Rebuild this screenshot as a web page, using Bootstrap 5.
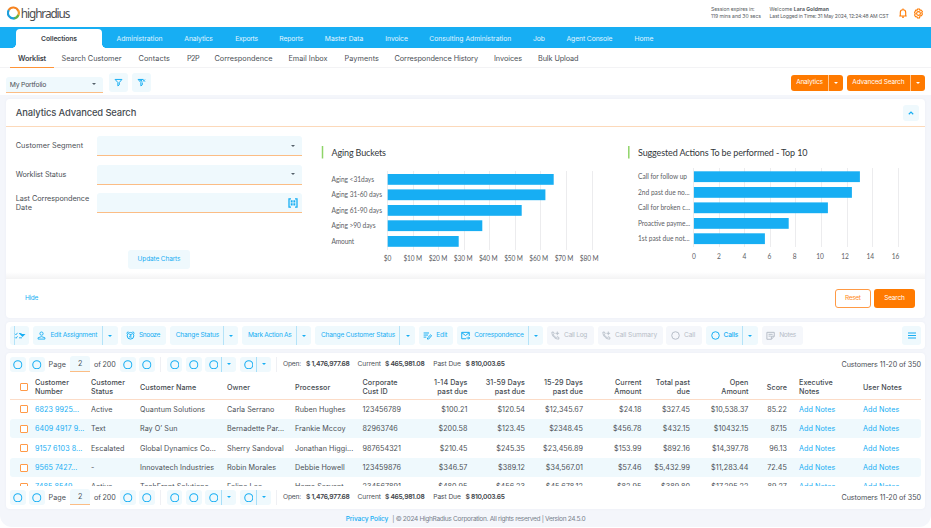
<!DOCTYPE html>
<html lang="en">
<head>
<meta charset="utf-8">
<meta name="viewport" content="width=device-width, initial-scale=1">
<title>Collections Worklist</title>
<link rel="stylesheet" href="https://cdn.jsdelivr.net/npm/bootstrap@5.3.0/dist/css/bootstrap.min.css">
<style>
:root{--hr-blue:#17aef3;--hr-orange:#ff7a00;--hr-tint:#eff9fd;--hr-text:#4b5056;--hr-peach:#fbbd85}
html,body{height:528px;overflow:hidden}
body{font-family:Inter,"Open Sans",sans-serif;font-size:7.2px;line-height:9px;color:var(--hr-text);background:#fff}
a{text-decoration:none;color:var(--hr-blue)}
svg{display:block;flex:none}
.fit{white-space:nowrap;display:inline-block}
.shell{height:527px;background:#f4f6fb;border-radius:0 0 12px 12px;overflow:hidden}
.top-bar{height:27px;background:#fff;padding:0 7px 0 7px}
.meta{font-size:5.1px;line-height:7.4px;color:#565b61;height:15px}
.brand-name{font-family:"Noto Sans","Open Sans",sans-serif;font-size:11.8px;line-height:14px;color:#4d4d4f;margin:0 0 1px .8px}
.main-nav{height:21px;background:var(--hr-blue);padding-left:16px}
.main-nav a{color:#e0f5ff;font-size:6.8px;padding-top:1.6px}
.main-nav .tab-on{width:86px;height:19px;margin-top:2px;background:#fff;border-radius:4px 4px 0 0;color:#3d444a;font-weight:600;position:relative;padding-top:0}
.tab-on::before,.tab-on::after{content:"";position:absolute;bottom:0;width:4px;height:4px}
.tab-on::before{left:-4px;background:radial-gradient(circle at 0 0,transparent 3.6px,#fff 4px)}
.tab-on::after{right:-4px;background:radial-gradient(circle at 100% 0,transparent 3.6px,#fff 4px)}
.sub-nav{height:20px;background:#fff;border-bottom:1px solid #f3f3f5;padding-left:10px}
.sub-nav a{color:var(--hr-text);font-size:7.3px;height:20px;line-height:22.4px}
.sub-nav .on{width:44px;text-align:center;font-weight:600;border-bottom:1px solid #ff9438;color:#3d444a}
.filter-bar{height:27.5px;background:#fff;padding:4px 6px 0}
.field{background:var(--hr-tint);border-bottom:1px solid var(--hr-peach);border-radius:3px 3px 0 0}
.caret{width:0;height:0;border:2.4px solid transparent;border-top:2.6px solid #54606a;border-bottom:0;flex:none}
.caret.b{border-top-color:var(--hr-blue);border-width:2.9px 2.6px 0}
.caret.w{border-top-color:#fff;border-width:2.9px 2.6px 0}
.tile{background:var(--hr-tint);border-radius:3px;color:var(--hr-blue);display:flex;align-items:center;justify-content:center;flex:none}
.solid{background:var(--hr-orange);border-radius:3px;height:16px;color:#fff;font-size:6.5px}
.solid .cut{border-left:1px solid #ffc793;height:16px;width:15.3px}
.panel{background:#fff;border-radius:4px;margin:0 6px;box-shadow:0 0 3px rgba(60,80,120,.05)}
.search-panel{height:219px;margin-top:3.8px}
.panel-head{height:28px;border-bottom:1px solid #fcd9ba;padding:0 4px 0 9.7px}
.panel-head h1{font-size:9.4px;line-height:12px;font-weight:500;margin:0;color:#464b51}
.panel-body{height:151.5px;background:linear-gradient(#fff 0,#fff 145px,#f4f4f5 151.5px)}
.form-side{width:297px;padding:9px 0 0 9.7px}
.form-line{height:28.5px}
.form-line .name{width:81.3px;font-size:7.3px}
.form-line .field{width:205.4px;height:20px;padding-right:7px}
.panel-foot{height:39px;padding:0 10.3px 0 19px;font-size:6.5px}
.reset{width:36px;height:19.5px;border:1px solid #ff9a45;border-radius:3px;color:#ff8a20}
.find{width:40.5px;height:19.5px;background:var(--hr-orange);border-radius:3px;color:#fff;margin-left:3.5px}
.chart{font-family:Lato,sans-serif;font-size:6.6px;fill:#5c6065}
.chart .cap{font-size:9px;fill:#33373b}
.chart .bars{fill:var(--hr-blue)}
.chart .grid-lines{stroke:#ececee;stroke-width:1}
.tools{height:27px;margin-top:4px;padding:0 4px;gap:3.9px;font-size:6.6px}
.tools .act{height:19px;background:var(--hr-tint);border-radius:3px;color:var(--hr-blue);padding-left:4.5px;gap:4px;display:flex;align-items:center;flex:none}
.tools .act.plain{padding-left:6px}
.tools .act.off{background:#f5f7fb;color:#b6bdc7}
.tools .drop{margin-left:auto;width:15.6px;height:19px;border-left:1px solid #b5e3f8;display:flex;align-items:center;justify-content:center}
.w1{width:19px}.w2{width:84.7px}.w3{width:44.3px}.w4{width:68.5px}.w5{width:69px}.w6{width:100px}.w7{width:34px}.w8{width:86px}.w9{width:47px}.w10{width:65px}.w11{width:35.8px}.w12{width:51.7px}.w13{width:41px}
.grid-panel{height:156px;margin-top:4px;padding:0 4px}
.pager{height:22.6px;font-size:7.2px}
.pager .tile{width:15.5px;height:15.5px;margin-right:3.8px}
.pager .tile.wide{width:31px;margin-right:4px;justify-content:flex-start;padding-left:3.2px}
.pager .wide .cut{border-left:1px solid #a9dff8;height:15.5px;width:15.3px;margin-left:auto}
.pager .field{width:20px;height:16px;margin:0 4px}
.pager .bar{width:1px;height:15px;background:#eff0f4}
.pager .tot{font-size:6.7px}
.pager .tot b{font-weight:600;color:#3d4247}
.rows-box{height:110.4px;overflow:hidden}
.grid-table{table-layout:fixed;width:911px;margin:0;font-size:7.2px;letter-spacing:.05px;line-height:9px;border-collapse:separate;border-spacing:0;color:var(--hr-text)}
.grid-table th{font-weight:500;height:24px;padding:0;vertical-align:middle;border-bottom:1px solid #fcdcc7;color:#464b51}
.grid-table td{height:19.4px;padding:0;white-space:nowrap;vertical-align:middle}
.grid-table tr:nth-child(even) td{background:var(--hr-tint)}
.grid-table td:first-child{border-radius:3px 0 0 3px}
.grid-table td:last-child{border-radius:0 3px 3px 0}
.grid-table .ex{padding-left:12px}
.grid-table th:nth-child(n+8):nth-child(-n+14),.grid-table td:nth-child(n+8):nth-child(-n+14){text-align:right}
.tick{width:8px;height:8px;border:1px solid #ff9a48;border-radius:1px;margin-left:10px;background:#fff}
.legal{height:18px;font-size:6.6px;color:#78818c;padding-top:3.5px}
</style>
<script src="https://cdn.jsdelivr.net/npm/bootstrap@5.3.0/dist/js/bootstrap.bundle.min.js"></script>
</head>
<body>
<svg width="0" height="0" class="position-absolute" aria-hidden="true">
  <symbol id="ring" viewBox="0 0 10 10"><circle cx="5" cy="5" r="4.200" fill="none" stroke="currentColor" stroke-width="1.100"/></symbol>
  <symbol id="funnel" viewBox="0 0 10 10"><path d="M1.200 1.600h7.600L5.900 5v2.600L4.300 8.800V5z" fill="none" stroke="currentColor" stroke-width="1.100" stroke-linejoin="round"/></symbol>
  <symbol id="phone" viewBox="0 0 10 10"><path d="M1 1.200h1.800l.7 2-1 .9c.7 1.500 1.800 2.600 3.300 3.300l.9-1 2 .7V9C4.300 9.100.9 5.600 1 1.200zM7 .6v4M5 2.600h4" fill="none" stroke="currentColor" stroke-width="1" stroke-linejoin="round"/></symbol>
</svg>
<div class="shell d-flex flex-column">
  <header class="top-bar d-flex align-items-center">
    <svg width="13" height="14" viewBox="0.500 0 13 14" fill="none" stroke-width="2.200"><path d="M2.200 4.200A5.300 5.300 0 0 1 11.800 5" stroke="#f5821f"/><path d="M11.600 4.200a5.300 5.300 0 0 1-.2 5.700" stroke="#f5a030"/><path d="M11.900 9a5.300 5.300 0 0 1-4.900 3.300" stroke="#62b345"/><path d="M8 12.200A5.300 5.300 0 0 1 2.300 4.200" stroke="#1c9fdc"/></svg>
    <span class="brand-name fit" data-w="48.500">highradius</span>
    <div class="meta ms-auto" style="width:58.500px"><span class="fit" data-w="43.500">Session expires in:</span><br><span class="fit" data-w="50">119 mins and 30 secs</span></div>
    <div class="meta" style="width:128.500px"><span class="fit" data-w="59.500">Welcome <b>Lara Goldman</b></span><br><span class="fit" data-w="119">Last Logged in Time: 31 May 2024, 12:24:48 AM CST</span></div>
    <svg width="10" height="10" viewBox="0 0 10 10" fill="none" stroke="#ff7a00" stroke-width="1.100"><path d="M1.300 8h7.400M2.300 8V4.400a2.700 2.700 0 0 1 5.400 0V8M5 .6v1.200M4 9.300h2"/></svg>
    <svg width="11" height="11" viewBox="0 0 11 11" fill="none" stroke="#ff7a00" stroke-width="1.100" style="margin-left:5px"><path d="M4.500 1h2l.4 1.300 1.200-.3 1.300 1.600-.7 1.200.7 1.300-.9 1.700-1.400-.1L6.500 10h-2l-.6-1.300-1.400.1-.9-1.700.7-1.300-.7-1.200L2.800 2l1.300.3z" stroke-linejoin="round"/><circle cx="5.500" cy="5.500" r="1.900"/></svg>
  </header>

  <nav class="main-nav d-flex align-items-center">
    <a href="#" class="tab-on d-flex align-items-center justify-content-center"><span class="fit" data-w="36">Collections</span></a>
    <a href="#" style="margin-left:14.500px"><span class="fit" data-w="46">Administration</span></a>
    <a href="#" style="margin-left:21.800px"><span class="fit" data-w="28.500">Analytics</span></a>
    <a href="#" style="margin-left:22.500px"><span class="fit" data-w="22.500">Exports</span></a>
    <a href="#" style="margin-left:21.500px"><span class="fit" data-w="24">Reports</span></a>
    <a href="#" style="margin-left:21.500px"><span class="fit" data-w="38.500">Master Data</span></a>
    <a href="#" style="margin-left:22px"><span class="fit" data-w="22.500">Invoice</span></a>
    <a href="#" style="margin-left:21.500px"><span class="fit" data-w="82">Consulting Administration</span></a>
    <a href="#" style="margin-left:21.700px"><span class="fit" data-w="12">Job</span></a>
    <a href="#" style="margin-left:21.500px"><span class="fit" data-w="46">Agent Console</span></a>
    <a href="#" style="margin-left:22px"><span class="fit" data-w="19">Home</span></a>
  </nav>

  <nav class="sub-nav d-flex">
    <a href="#" class="on"><span class="fit" data-w="28">Worklist</span></a>
    <a href="#" style="margin-left:7.500px"><span class="fit" data-w="60">Search Customer</span></a>
    <a href="#" style="margin-left:17px"><span class="fit" data-w="31.500">Contacts</span></a>
    <a href="#" style="margin-left:17px"><span class="fit" data-w="12">P2P</span></a>
    <a href="#" style="margin-left:15.500px"><span class="fit" data-w="58">Correspondence</span></a>
    <a href="#" style="margin-left:16px"><span class="fit" data-w="39">Email Inbox</span></a>
    <a href="#" style="margin-left:17px"><span class="fit" data-w="34.500">Payments</span></a>
    <a href="#" style="margin-left:15.500px"><span class="fit" data-w="83.500">Correspondence History</span></a>
    <a href="#" style="margin-left:16px"><span class="fit" data-w="28">Invoices</span></a>
    <a href="#" style="margin-left:16px"><span class="fit" data-w="40.500">Bulk Upload</span></a>
  </nav>

  <div class="filter-bar d-flex align-items-start">
    <div class="field d-flex align-items-center justify-content-between" style="width:96.500px;height:16px;margin-top:4.600px;padding:0 6.500px 0 3.700px"><span class="fit" data-w="36.500" style="font-size:6.800px">My Portfolio</span><span class="caret"></span></div>
    <div class="tile" style="width:19.300px;height:19px;margin-left:6px;margin-top:.7px"><svg width="9" height="9"><use href="#funnel"/></svg></div>
    <div class="tile" style="width:19.300px;height:19px;margin-left:4px;margin-top:.7px"><svg width="9" height="9" viewBox="0 0 10 10"><path d="M5.900 5v2.600L4.300 8.800V5L1.200 1.600h6" fill="none" stroke="currentColor" stroke-width="1.100"/><path d="M2.500 2h3L5.500 4.500z" fill="currentColor"/><path d="m6.500 1.700 2.400 2.400m0-2.400L6.500 4.100" stroke="currentColor" stroke-width="1"/></svg></div>
    <div class="solid d-flex align-items-center ms-auto" style="width:52.500px;margin-top:2.800px"><span class="flex-fill text-center"><span class="fit" data-w="26.500">Analytics</span></span><span class="cut d-flex align-items-center justify-content-center"><i class="caret w"></i></span></div>
    <div class="solid d-flex align-items-center" style="width:78px;margin:2.800px 0 0 3.700px"><span class="flex-fill text-center"><span class="fit" data-w="52">Advanced Search</span></span><span class="cut d-flex align-items-center justify-content-center"><i class="caret w"></i></span></div>
  </div>

  <section class="panel search-panel">
    <div class="panel-head d-flex align-items-center justify-content-between"><h1><span class="fit" data-w="120.500">Analytics Advanced Search</span></h1>
      <div class="tile" style="width:16px;height:16px;margin-right:2px"><svg width="6" height="4" viewBox="0 0 6 4"><path d="M.8 3.200 3 1.100 5.200 3.200" fill="none" stroke="currentColor" stroke-width="1.200"/></svg></div></div>
    <div class="panel-body d-flex">
      <div class="form-side">
        <div class="form-line d-flex"><label class="name" style="padding-top:5.200px"><span class="fit" data-w="67.500">Customer Segment</span></label><div class="field d-flex align-items-center justify-content-end"><i class="caret"></i></div></div>
        <div class="form-line d-flex"><label class="name" style="padding-top:5.200px"><span class="fit" data-w="50.500">Worklist Status</span></label><div class="field d-flex align-items-center justify-content-end"><i class="caret"></i></div></div>
        <div class="form-line d-flex"><label class="name" style="padding-top:.7px"><span class="fit" data-w="73.500">Last Correspondence</span><br><span class="fit" data-w="16.500">Date</span></label><div class="field d-flex align-items-center justify-content-end" style="padding-right:4.500px"><svg width="10" height="10" viewBox="0 0 10 10" fill="none" stroke="#17aef3" stroke-width="1.300"><path d="M3 .8H1v8.400h2M7 .8h2v8.400H7"/><path d="M2.700 3.300h1.900m.8 0h1.900M2.700 6.300h1.900m.8 0h1.900" stroke-width="2.200"/></svg></div></div>
        <div class="tile" style="width:62.600px;height:19px;margin:28.500px 0 0 112px;font-size:6.500px"><span class="fit" data-w="42.800">Update Charts</span></div>
      </div>
      <svg class="chart" width="307" height="145" viewBox="303 127 307 145">
        <path d="M322.500 146v12.500" stroke="#8fd468" stroke-width="1.500"/>
        <text class="cap" x="331.500" y="156" textLength="54.500">Aging Buckets</text>
        <path class="grid-lines" d="M387.500 171v79M413.500 171v79M438.500 171v79M464.500 171v79M489.500 171v79M515.500 171v79M540.500 171v79M566.500 171v79M592.500 171v79"/>
        <g class="bars"><rect x="387.700" y="174" width="166" height="10.800"/><rect x="387.700" y="189.400" width="157.700" height="10.800"/><rect x="387.700" y="205" width="134" height="10.800"/><rect x="387.700" y="220.300" width="94.600" height="10.800"/><rect x="387.700" y="236" width="71" height="10.800"/></g>
        <text x="331.500" y="182" textLength="42.500">Aging &lt;31days</text><text x="331.500" y="197.400" textLength="50.500">Aging 31-60 days</text><text x="331.500" y="213" textLength="50.500">Aging 61-90 days</text><text x="331.500" y="228.300" textLength="44">Aging &gt;90 days</text><text x="331.500" y="243.800" textLength="22.500">Amount</text>
        <g text-anchor="middle"><text x="387.500" y="260.600">$0</text><text x="412.800" y="260.600" textLength="18.700">$10 M</text><text x="438" y="260.600" textLength="18.700">$20 M</text><text x="463.200" y="260.600" textLength="18.700">$30 M</text><text x="488.300" y="260.600" textLength="18.700">$40 M</text><text x="513.500" y="260.600" textLength="18.700">$50 M</text><text x="538.700" y="260.600" textLength="18.700">$60 M</text><text x="564" y="260.600" textLength="18.700">$70 M</text><text x="589.200" y="260.600" textLength="18.700">$80 M</text></g>
      </svg>
      <svg class="chart" width="307" height="145" viewBox="610 127 307 145">
        <path d="M628.800 146v12.500" stroke="#8fd468" stroke-width="1.500"/>
        <text class="cap" x="638" y="156" textLength="169.500">Suggested Actions To be performed - Top 10</text>
        <path class="grid-lines" d="M693.500 168v79M719.500 168v79M744.500 168v79M770.500 168v79M795.500 168v79M821.500 168v79M847.500 168v79M872.500 168v79M898.500 168v79"/>
        <g class="bars"><rect x="693.900" y="171.300" width="166" height="10.800"/><rect x="693.900" y="187" width="158" height="10.800"/><rect x="693.900" y="202.400" width="134" height="10.800"/><rect x="693.900" y="218" width="94.800" height="10.800"/><rect x="693.900" y="233.300" width="71" height="10.800"/></g>
        <text x="638" y="179.300" textLength="49">Call for follow up</text><text x="638" y="195" textLength="51.500">2nd past due no...</text><text x="638" y="210.400" textLength="52">Call for broken c...</text><text x="638" y="226" textLength="52">Proactive payme...</text><text x="638" y="241.300" textLength="51.500">1st past due not...</text>
        <g text-anchor="middle"><text x="694" y="259.200">0</text><text x="719" y="259.200">2</text><text x="744.300" y="259.200">4</text><text x="769.500" y="259.200">6</text><text x="794.700" y="259.200">8</text><text x="820" y="259.200">10</text><text x="845" y="259.200">12</text><text x="870.300" y="259.200">14</text><text x="895.600" y="259.200">16</text></g>
      </svg>
    </div>
    <div class="panel-foot d-flex align-items-center"><a href="#"><span class="fit" data-w="13">Hide</span></a><div class="reset d-flex align-items-center justify-content-center ms-auto"><span class="fit" data-w="15.500">Reset</span></div><div class="find d-flex align-items-center justify-content-center"><span class="fit" data-w="20.500">Search</span></div></div>
  </section>

  <section class="panel tools d-flex align-items-center">
    <div class="act w1" style="padding-left:3.500px"><svg width="12" height="19" viewBox="0 0 12 19" fill="none" stroke="currentColor"><path d="M.5 0v19" stroke="#b5e3f8"/><path d="M1 7.800l1 1 1.500-2M1 11.300l1 1 1.500-2M5 7.500h2.500M5 11.800h3" stroke-width=".9"/><path d="M5.500 8h6L8.500 11z" fill="currentColor" stroke="none"/></svg></div>
    <div class="act w2"><svg width="9" height="9" viewBox="0 0 10 10" fill="none" stroke="currentColor"><circle cx="5" cy="2.900" r="1.800"/><path d="M1.200 9V7.500Q5 5 8.800 7.500V9z"/></svg><span class="fit" data-w="46.700">Edit Assignment</span><span class="drop"><i class="caret b"></i></span></div>
    <div class="act w3"><svg width="9" height="9" viewBox="0 0 10 10" fill="none" stroke="currentColor" stroke-width="1.100"><circle cx="5" cy="5.300" r="3.700"/><path d="M.5 2.500 2.600.6M9.500 2.500 7.400.6M3.700 4h2.500L3.800 6.700h2.500"/></svg><span class="fit" data-w="21">Snooze</span></div>
    <div class="act plain w4"><span class="fit" data-w="43.500">Change Status</span><span class="drop"><i class="caret b"></i></span></div>
    <div class="act plain w5"><span class="fit" data-w="43.500">Mark Action As</span><span class="drop"><i class="caret b"></i></span></div>
    <div class="act plain w6"><span class="fit" data-w="74">Change Customer Status</span><span class="drop"><i class="caret b"></i></span></div>
    <div class="act w7"><svg width="9" height="9" viewBox="0 0 10 10" fill="none" stroke="currentColor" stroke-width="1.100"><path d="M.7 2.200h6M.7 4.500h5M.7 6.800h3M5 9V7.700l3.600-3.500 1 1L6.200 9z"/></svg><span class="fit" data-w="11">Edit</span></div>
    <div class="act w8"><svg width="9" height="9" viewBox="0 0 10 10" fill="none" stroke="currentColor" stroke-width="1.100"><path d="M5.500 8.600H.8V1.500h8.400v4M.9 1.900 5 5l4.100-3.100M6 7.800h3.500M8.200 6.300l1.400 1.500-1.400 1.500"/></svg><span class="fit" data-w="49.300">Correspondence</span><span class="drop"><i class="caret b"></i></span></div>
    <div class="act off w9"><svg width="9" height="9"><use href="#phone"/></svg><span class="fit" data-w="23">Call Log</span></div>
    <div class="act off w10"><svg width="9" height="9"><use href="#phone"/></svg><span class="fit" data-w="42">Call Summary</span></div>
    <div class="act off w11"><svg width="9" height="9"><use href="#ring"/></svg><span class="fit" data-w="11.500">Call</span></div>
    <div class="act w12"><svg width="9" height="9"><use href="#ring"/></svg><span class="fit" data-w="14.500" style="font-weight:500">Calls</span><span class="drop"><i class="caret b"></i></span></div>
    <div class="act off w13"><svg width="9" height="9" viewBox="0 0 10 10" fill="none" stroke="currentColor" stroke-width="1.100"><path d="M9.200 5.800V1.500H1v7.700h5zH6v3.400M2.800 3.700h4.600M2.800 5.700h2.500"/></svg><span class="fit" data-w="16.800">Notes</span></div>
    <div class="tile ms-auto" style="width:19px;height:19px"><svg width="8" height="7" viewBox="0 0 8 7" stroke="currentColor"><path d="M0 1h8M0 3.500h8M0 6h8" stroke-width="1.100"/></svg></div>
  </section>

  <section class="panel grid-panel">
    <div class="pager d-flex align-items-center">
      <div class="tile"><svg width="9.600" height="9.600"><use href="#ring"/></svg></div><div class="tile"><svg width="9.600" height="9.600"><use href="#ring"/></svg></div>
      <span class="fit" data-w="17.500">Page</span><div class="field d-flex align-items-center justify-content-center">2</div><span class="fit" data-w="21.500" style="margin-right:4.500px">of 200</span>
      <div class="tile"><svg width="9.600" height="9.600"><use href="#ring"/></svg></div><div class="tile"><svg width="9.600" height="9.600"><use href="#ring"/></svg></div>
      <span class="bar" style="margin:0 6px 0 1.200px"></span>
      <div class="tile"><svg width="9.600" height="9.600"><use href="#ring"/></svg></div><div class="tile"><svg width="9.600" height="9.600"><use href="#ring"/></svg></div>
      <div class="tile wide"><svg width="9.600" height="9.600"><use href="#ring"/></svg><span class="cut d-flex align-items-center justify-content-center"><i class="caret b"></i></span></div>
      <div class="tile wide"><svg width="9.600" height="9.600"><use href="#ring"/></svg><span class="cut d-flex align-items-center justify-content-center"><i class="caret b"></i></span></div>
      <span class="bar" style="margin:0 5.500px 0 1px"></span>
      <span class="tot"><span class="fit" data-w="18">Open:</span></span><span class="tot" style="margin-left:5px"><b class="fit" data-w="43.500">$ 1,476,977.68</b></span>
      <span class="tot" style="margin-left:8px"><span class="fit" data-w="23.500">Current</span></span><span class="tot" style="margin-left:4px"><b class="fit" data-w="39.500">$ 465,981.08</b></span>
      <span class="tot" style="margin-left:8.800px"><span class="fit" data-w="27.500">Past Due</span></span><span class="tot" style="margin-left:4.800px"><b class="fit" data-w="39">$ 810,003.65</b></span>
      <span class="fit ms-auto" data-w="79.500">Customers 11-20 of 350</span>
    </div>
    <div class="rows-box">
      <table class="grid-table">
        <colgroup><col style="width:25px"><col style="width:56px"><col style="width:49px"><col style="width:87px"><col style="width:68px"><col style="width:67.500px"><col style="width:55px"><col style="width:50px"><col style="width:57.500px"><col style="width:58px"><col style="width:58.500px"><col style="width:48.500px"><col style="width:58.500px"><col style="width:38.500px"><col style="width:76px"><col style="width:58px"></colgroup>
        <thead><tr><th><div class="tick"></div></th><th>Customer<br>Number</th><th>Customer<br>Status</th><th>Customer Name</th><th>Owner</th><th>Processor</th><th>Corporate<br>Cust ID</th><th>1-14 Days<br>past due</th><th>31-59 Days<br>past due</th><th>15-29 Days<br>past due</th><th>Current<br>Amount</th><th>Total past<br>due</th><th>Open<br>Amount</th><th>Score</th><th class="ex">Executive<br>Notes</th><th>User Notes</th></tr></thead>
        <tbody>
          <tr><td><div class="tick"></div></td><td><a href="#">6823 9925...</a></td><td>Active</td><td>Quantum Solutions</td><td>Carla Serrano</td><td>Ruben Hughes</td><td>123456789</td><td>$100.21</td><td>$120.54</td><td>$12,345.67</td><td>$24.18</td><td>$327.45</td><td>$10,538.37</td><td>85.22</td><td class="ex"><a href="#">Add Notes</a></td><td><a href="#">Add Notes</a></td></tr>
          <tr><td><div class="tick"></div></td><td><a href="#">6409 4917 9...</a></td><td>Text</td><td>Ray O’ Sun</td><td>Bernadette Par...</td><td>Frankie Mccoy</td><td>82963746</td><td>$200.58</td><td>$123.45</td><td>$2348.45</td><td>$456.78</td><td>$432.15</td><td>$10432.15</td><td>87.15</td><td class="ex"><a href="#">Add Notes</a></td><td><a href="#">Add Notes</a></td></tr>
          <tr><td><div class="tick"></div></td><td><a href="#">9157 6103 8...</a></td><td>Escalated</td><td>Global Dynamics Co...</td><td>Sherry Sandoval</td><td>Jonathan Higgi...</td><td>987654321</td><td>$210.45</td><td>$245.35</td><td>$23,456.89</td><td>$153.99</td><td>$892.16</td><td>$14,397.78</td><td>96.13</td><td class="ex"><a href="#">Add Notes</a></td><td><a href="#">Add Notes</a></td></tr>
          <tr><td><div class="tick"></div></td><td><a href="#">9565 7427...</a></td><td>-</td><td>Innovatech Industries</td><td>Robin Morales</td><td>Debbie Howell</td><td>123459876</td><td>$346.57</td><td>$389.12</td><td>$34,567.01</td><td>$57.46</td><td>$5,432.99</td><td>$11,283.44</td><td>72.45</td><td class="ex"><a href="#">Add Notes</a></td><td><a href="#">Add Notes</a></td></tr>
          <tr><td><div class="tick"></div></td><td><a href="#">7485 8549...</a></td><td>Active</td><td>TechFront Solutions</td><td>Felipe Lee</td><td>Hema Servant</td><td>234567891</td><td>$480.95</td><td>$456.23</td><td>$45,678.12</td><td>$82.95</td><td>$389.80</td><td>$17,295.22</td><td>89.27</td><td class="ex"><a href="#">Add Notes</a></td><td><a href="#">Add Notes</a></td></tr>
        </tbody>
      </table>
    </div>
  </section>

  <footer class="legal d-flex align-items-center justify-content-center"><a href="#"><span class="fit" data-w="42.500" style="font-weight:500">Privacy Policy</span></a><span class="fit" data-w="193" style="margin-left:4px">| © 2024 HighRadius Corporation. All rights reserved | Version 24.5.0</span></footer>
</div>
<script>
// The pager is repeated under the rows.
document.querySelector('.grid-panel').append(document.querySelector('.pager').cloneNode(true));
// Spread each label's letters so that it fills its design width.
document.querySelectorAll('.fit[data-w]').forEach(function (el) {
  var gap = parseFloat(el.dataset.w) - el.getBoundingClientRect().width;
  el.style.letterSpacing = (gap / el.textContent.length).toFixed(3) + 'px';
});
</script>
</body>
</html>
